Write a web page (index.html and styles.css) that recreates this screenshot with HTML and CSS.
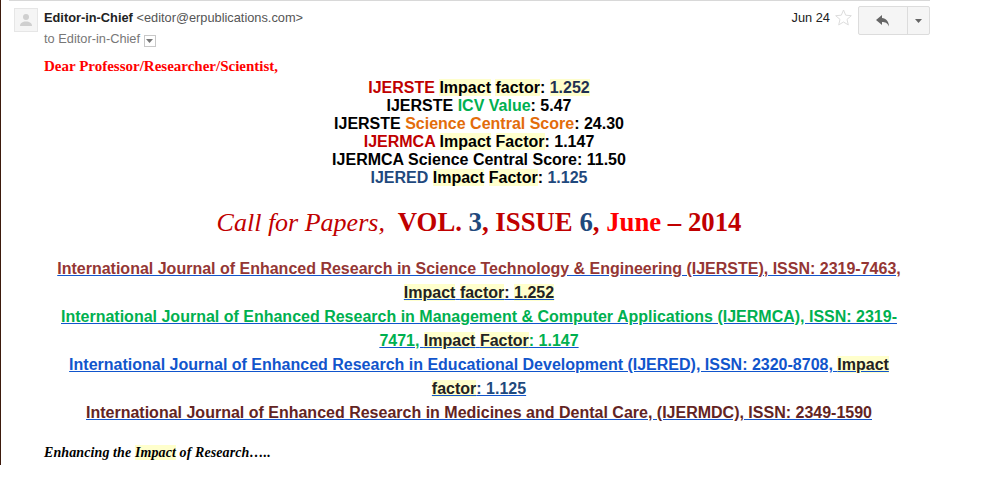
FILE: index.html
```html
<!doctype html>
<html lang="en">
<head>
    <meta charset="UTF-8">
    <title>Call for Papers</title>
    <link rel="stylesheet" href="styles.css">
</head>
<body>
    <div class="mail">
        <div class="mail-header">
            <div class="avatar">
                <svg width="14" height="14" viewBox="0 0 14 14"><circle cx="7" cy="4" r="3" fill="#cfcfcf"/><path d="M1 13c0-3 2.500-4.500 6-4.500s6 1.500 6 4.500z" fill="#cfcfcf"/></svg>
            </div>
            <div class="sender">
                <div class="sender-from"><b>Editor-in-Chief</b> <span class="sender-mail">&lt;editor@erpublications.com&gt;</span></div>
                <div class="sender-to">to Editor-in-Chief
                    <span class="more-btn"><svg width="7" height="4" viewBox="0 0 7 4"><path d="M0 0h7L3.500 4z" fill="#777"/></svg></span>
                </div>
            </div>
            <div class="date">Jun 24</div>
            <svg class="star" width="17" height="17" viewBox="0 0 17 17"><path d="M8.500 1l2.200 5.200 5.600.5-4.300 3.700 1.300 5.500-4.800-2.900-4.800 2.900 1.300-5.500L.7 6.700l5.600-.5z" fill="none" stroke="#ddd"/></svg>
            <div class="reply-group">
                <div class="reply-btn"><svg width="14" height="12" viewBox="0 0 14 12"><path d="M6 0L0 5l6 5V7c3 0 5.500.8 7 4.500C13 6.500 10 3.500 6 3z" fill="#666"/></svg></div>
                <div class="reply-more"><svg width="7" height="4" viewBox="0 0 7 4"><path d="M0 0h7L3.500 4z" fill="#666"/></svg></div>
            </div>
        </div>

        <div class="mail-body">
            <p class="greeting">Dear Professor/Researcher/Scientist,</p>

            <div class="scores">
                <div><span class="dark-red">IJERSTE</span> <mark>Impact</mark> <mark>factor</mark>: <mark class="navy-black">1.252</mark></div>
                <div>IJERSTE <span class="green">ICV Value</span>: 5.47</div>
                <div>IJERSTE <span class="orange">Science Central Score</span>: 24.30</div>
                <div><span class="dark-red">IJERMCA</span> <mark>Impact</mark> <mark>Factor</mark>: 1.147</div>
                <div>IJERMCA Science Central Score: 11.50</div>
                <div><span class="blue">IJERED</span> <mark>Impact</mark> <mark>Factor</mark>: <span class="blue">1.125</span></div>
            </div>

            <h1 class="call"><i>Call for Papers,</i>&nbsp; VOL. <span class="blue">3</span>, ISSUE <span class="blue">6</span>, <span class="red">June</span> – 2014</h1>

            <div class="journals">
                <a class="j-brown">International Journal of Enhanced Research in Science Technology &amp; Engineering (IJERSTE), ISSN: 2319-7463, <span class="j-dark"><mark>Impact</mark> <mark>factor</mark>: <mark>1.252</mark></span></a><br>
                <a class="j-green">International Journal of Enhanced Research in Management &amp; Computer Applications (IJERMCA), ISSN: 2319-7471, <span class="j-dark"><mark>Impact</mark> <mark>Factor</mark></span>: 1.147</a><br>
                <a class="j-blue">International Journal of Enhanced Research in Educational Development (IJERED), ISSN: 2320-8708, <span class="j-dark"><mark>Impact</mark> <mark>factor</mark></span><span class="j-navy">: 1.125</span></a><br>
                <a class="j-maroon">International Journal of Enhanced Research in Medicines and Dental Care, (IJERMDC), ISSN: 2349-1590</a>
            </div>

            <p class="tagline">Enhancing the <mark>Impact</mark> of Research…..</p>
        </div>
    </div>
</body>
</html>
```

FILE: styles.css
```css
html,
body {
    margin: 0;
    padding: 0;
    background: #fff;
    overflow: hidden;
}

.mail {
    box-sizing: border-box;
    height: 465px;
    width: 930px;
    padding-left: 8px;
    border-left: 1px solid #3d1a0c;
    font-family: "Liberation Sans", Arial, sans-serif;
}

/* 顶部分割线 */
.mail-header {
    display: flex;
    align-items: flex-start;
    height: 46px;
    padding: 7px 0 0 5px;
    box-sizing: border-box;
    border-top: 1px solid #d8d8d8;
    font-size: 12.8px;
}

.avatar {
    display: flex;
    align-items: center;
    justify-content: center;
    width: 22px;
    height: 22px;
    margin-right: 6px;
    border: 1px solid #e6e6e6;
    background: #f5f5f5;
}

.sender {
    flex: 1;
    color: #777;
}

.sender-from {
    line-height: 20px;
}

.sender-from b {
    color: #222;
}

.sender-mail {
    color: #555;
}

.sender-to {
    line-height: 21px;
}

.more-btn {
    display: inline-flex;
    align-items: center;
    justify-content: center;
    width: 10px;
    height: 10px;
    vertical-align: 0;
    border: 1px solid #c8c8c8;
}

.date {
    color: #222;
    line-height: 20px;
    margin-right: 5px;
}

.star {
    margin: 1px 6px 0 0;
}

.reply-group {
    display: flex;
    height: 27px;
    margin-top: -2px;
    border: 1px solid #dcdcdc;
    border-radius: 2px;
    background: #f5f5f5;
}

.reply-btn {
    display: flex;
    align-items: center;
    justify-content: center;
    width: 48px;
    border-right: 1px solid #dcdcdc;
}

.reply-more {
    display: flex;
    align-items: center;
    justify-content: center;
    width: 21px;
}

.mail-body {
    width: 870px;
    padding-left: 35px;
    text-align: center;
    color: #000;
    font-weight: bold;
}

mark {
    background: #ffffcc;
    color: inherit;
}

.greeting {
    margin: 0;
    padding-top: 11px;
    text-align: left;
    color: #ff0000;
    font: bold 15px/18px "Liberation Serif", "Times New Roman", serif;
}

.scores {
    font-size: 16px;
    line-height: 18px;
    margin-top: 4px;
}

.navy-black {
    color: #1f3050;
}

.dark-red {
    color: #c00000;
}

.green {
    color: #00b050;
}

.orange {
    color: #e36c0a;
}

.blue {
    color: #1f497d;
}

.red {
    color: #ff0000;
}

.call {
    margin: 17px 0 0;
    color: #c00000;
    font: bold 26.75px/36px "Liberation Serif", "Times New Roman", serif;
}

.call i {
    font-size: 26px;
    font-weight: normal;
}

.journals {
    margin-top: 16px;
    font-size: 16px;
    line-height: 24px;
}

.journals a {
    text-decoration: underline;
    text-decoration-color: #1155cc;
}

.j-brown {
    color: #943634;
}

.j-green {
    color: #00b050;
}

.j-blue {
    color: #1155cc;
}

.j-maroon {
    color: #632423;
}

.j-dark {
    color: #222;
}

.j-navy {
    color: #1f497d;
}

.tagline {
    margin: 19px 0 0;
    text-align: left;
    font: italic bold 14px/18px "Liberation Serif", "Times New Roman", serif;
    letter-spacing: 0.1px;
}
```
